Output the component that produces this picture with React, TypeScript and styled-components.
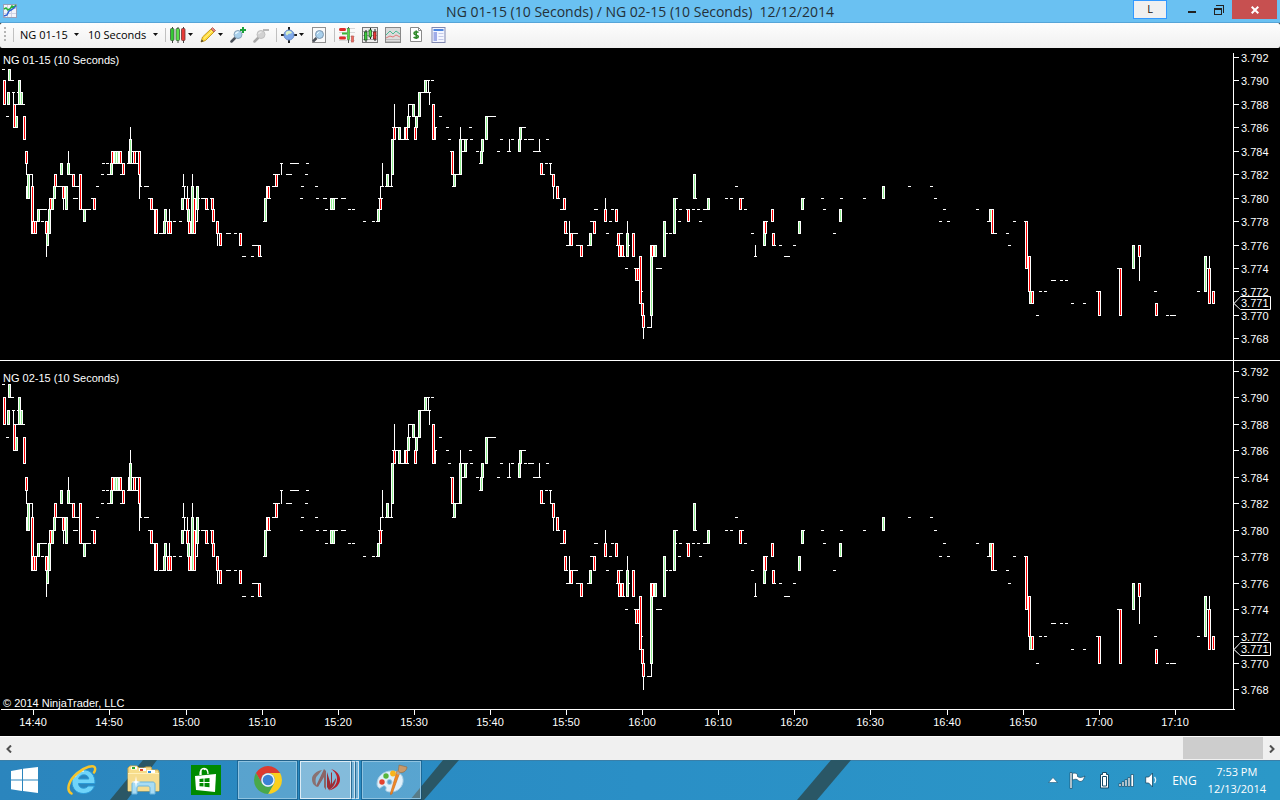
import React from "react";
import styled, { createGlobalStyle } from "styled-components";

const GlobalStyle = createGlobalStyle`
  * { box-sizing: border-box; }
  body { margin: 0; background: #000; }
  button, select { font: inherit; color: inherit; border: 0; padding: 0; margin: 0; background: none; }
  svg { display: block; }
`;

const UI_FONT = `"Open Sans", "Noto Sans", sans-serif`;
const CHART_FONT = `"Liberation Sans", Arial, sans-serif`;

const Window = styled.div`
  display: flex;
  flex-direction: column;
  min-height: 100vh;
  background: #000;
  font-family: ${UI_FONT};
  overflow: hidden;
`;

/* ---------- title bar ---------- */

const TitleBar = styled.header`
  position: relative;
  display: flex;
  justify-content: space-between;
  height: 23px;
  padding-left: 3px;
  background: #6ac1f2;
  border-bottom: 1px solid #56a5d8;
`;

const AppIcon = styled.div`
  padding-top: 4px;
`;

const Title = styled.h1`
  position: absolute;
  inset: 0;
  margin: 0;
  font-size: 14px;
  font-weight: 400;
  line-height: 23px;
  text-align: center;
  white-space: pre;
  color: #243038;
  pointer-events: none;
`;

const WindowControls = styled.div`
  position: relative;
  display: flex;
  align-items: flex-start;
  padding-right: 3px;
`;

const LanguageTag = styled.button`
  width: 34px;
  height: 19px;
  margin-right: 11px;
  border: 1px solid #3399ff;
  background: #f0f0f0;
  font-size: 11px;
  line-height: 14px;
  padding-bottom: 2px;
  color: #111;
`;

const ControlButton = styled.button<{ $close?: boolean }>`
  display: flex;
  align-items: center;
  justify-content: center;
  width: ${(p) => (p.$close ? 45 : 27)}px;
  height: 19px;
  background: ${(p) => (p.$close ? "#c75050" : "transparent")};
`;

/* ---------- toolbar ---------- */

const Toolbar = styled.div`
  display: flex;
  align-items: center;
  gap: 7px;
  height: 25px;
  padding: 0 4px 2px;
  border-radius: 2px;
  background: linear-gradient(#fdfdfd, #f0f0f0);
  font-size: 11px;
  color: #000;
`;

const Separator = styled.span`
  width: 1px;
  height: 14px;
  margin-right: -3px;
  background: #c0c0c0;
`;

const Picker = styled.label`
  display: flex;
  align-items: center;
  gap: 6px;
  margin: 0 0 0 2px;

  select {
    appearance: none;
    outline: 0;
    line-height: 16px;
  }
`;

const ToolButton = styled.button`
  display: flex;
  align-items: center;
  gap: 2px;
  height: 20px;
`;

/* ---------- charts ---------- */

const ChartRow = styled.section<{ $grow: number; $divided?: boolean }>`
  position: relative;
  display: grid;
  grid-template-columns: minmax(0, 1fr) 47px;
  flex: ${(p) => p.$grow} 0 ${(p) => p.$grow}px;
  border-top: ${(p) => (p.$divided ? "1px solid #fff" : "0")};
  font-family: ${CHART_FONT};
  font-size: 11px;
  line-height: 14px;
  color: #fff;
`;

const PlotSvg = styled.svg`
  width: 100%;
  height: 100%;
  min-height: 0;
`;

const AxisSvg = styled.svg`
  width: 100%;
  height: 100%;
  fill: #fff;
  overflow: visible;
`;

const PanelLabel = styled.h2<{ $top: number }>`
  position: absolute;
  left: 3px;
  top: ${(p) => p.$top}px;
  margin: 0;
  font-size: 11px;
  font-weight: 400;
`;

const Copyright = styled.small`
  position: absolute;
  left: 3px;
  bottom: 0;
  font-size: 11px;
  line-height: 12px;
`;

const TimeAxis = styled.div`
  flex: none;
  height: 27px;
  padding-right: 46px;
  font-family: ${CHART_FONT};
  font-size: 11px;
`;

/* ---------- scroll bar ---------- */

const ScrollBar = styled.div`
  display: flex;
  flex: none;
  height: 24px;
  background: #f0f0f0;
  border-top: 1px solid #fff;
`;

const ScrollArrow = styled.button`
  display: flex;
  align-items: center;
  justify-content: center;
  width: 17px;
`;

const ScrollTrack = styled.div`
  display: flex;
  flex: 1;
  justify-content: flex-end;
  padding-bottom: 1px;
`;

const ScrollThumb = styled.div`
  width: 80px;
  background: #cdcdcd;
`;

/* ---------- taskbar ---------- */

const Taskbar = styled.footer`
  position: relative;
  display: flex;
  flex: none;
  justify-content: space-between;
  height: 40px;
  background: linear-gradient(90deg, #2b85bd, #2a8fc6 50%, #2b98c8);
  box-shadow: inset 0 1px #3a7fa8;
  color: #fff;
`;

const Wallpaper = styled.svg`
  position: absolute;
  left: 0;
  top: 0;
  width: 100%;
  height: 40px;
`;

const TaskList = styled.nav`
  position: relative;
  display: flex;
  align-items: flex-start;
  gap: 3px;
  padding-top: 1px;
`;

const TaskButton = styled.button<{ $state?: "open" | "active"; $width?: number }>`
  display: flex;
  align-items: center;
  justify-content: center;
  width: ${(p) => p.$width ?? 59}px;
  height: 38px;
  border: 1px solid
    ${(p) => (p.$state === "active" ? "#dcecf6" : p.$state ? "#8fc3e0" : "transparent")};
  background: ${(p) =>
    p.$state === "active"
      ? "rgba(255,255,255,0.42)"
      : p.$state
        ? "rgba(255,255,255,0.22)"
        : "transparent"};
  box-shadow: ${(p) => (p.$state ? "0 0 0 1px rgba(10,70,110,0.5)" : "none")};
`;

const TaskGroup = styled.div`
  display: flex;
  width: 59px;
  height: 38px;
`;

const StackEdge = styled.span<{ $width: number }>`
  width: ${(p) => p.$width}px;
  border: 1px solid #cfe3f0;
  border-left: 1px solid #2b6c94;
  background: rgba(255, 255, 255, 0.35);
`;

const Tray = styled.div`
  position: relative;
  display: flex;
  align-items: center;
  gap: 7px;
  padding-right: 14px;
  font-size: 12px;
  line-height: 17px;
`;

const TrayButton = styled.button<{ $left?: number; $right?: number }>`
  display: flex;
  padding: 0 ${(p) => p.$right ?? 0}px 0 ${(p) => p.$left ?? 0}px;
`;

const Clock = styled.time`
  font-size: 11px;
  text-align: center;
`;

/* ---------- price data: levels are thousandths above 3.768 ---------- */

type Body = [x: number, low: number, high: number, kind: "r" | "g" | "w"];
type Wick = [x: number, low: number, high: number];
type Dash = [x: number, level: number, width: number];

const bodies: Body[] = [
  [8, 22, 23, "g"], [3, 20, 22, "r"], [7, 20, 21, "g"], [13, 18, 20, "r"], [15, 18, 19, "g"],
  [18, 20, 22, "g"], [20, 20, 21, "g"], [23, 17, 19, "r"], [25, 15, 16, "r"], [26, 12, 13, "w"],
  [27, 12, 14, "g"], [31, 9, 13, "r"], [32, 9, 10, "r"], [34, 9, 10, "r"], [37, 10, 11, "g"],
  [45, 9, 10, "r"], [46, 8, 9, "g"], [48, 9, 11, "g"], [49, 11, 12, "r"], [51, 11, 12, "g"],
  [53, 12, 13, "g"], [54, 13, 14, "r"], [62, 12, 13, "r"], [65, 11, 13, "g"], [60, 14, 15, "g"],
  [67, 14, 15, "g"], [72, 13, 14, "r"], [79, 11, 14, "r"], [83, 10, 11, "g"], [93, 11, 12, "r"],
  [110, 14, 15, "g"], [111, 15, 16, "r"], [114, 15, 16, "g"], [116, 15, 16, "g"], [119, 15, 16, "r"],
  [122, 14, 15, "r"], [128, 15, 16, "g"], [129, 15, 17, "g"], [133, 15, 16, "r"], [138, 14, 16, "r"],
  [150, 11, 12, "r"], [154, 9, 11, "w"], [155, 9, 11, "r"], [163, 9, 10, "g"], [164, 10, 11, "g"],
  [167, 9, 10, "r"], [169, 9, 10, "r"], [181, 11, 12, "g"], [186, 11, 12, "r"], [187, 10, 11, "g"],
  [188, 9, 10, "r"], [190, 9, 10, "g"], [191, 9, 13, "g"], [193, 9, 12, "r"], [196, 11, 13, "g"],
  [205, 11, 12, "r"], [211, 11, 12, "r"], [212, 10, 11, "r"], [216, 9, 10, "r"], [219, 8, 9, "r"],
  [239, 8, 9, "r"], [258, 7, 8, "r"], [264, 10, 12, "g"], [267, 12, 13, "r"], [275, 13, 14, "r"],
  [330, 11, 12, "g"], [332, 11, 12, "g"], [377, 10, 11, "g"], [379, 11, 12, "r"], [386, 13, 14, "g"],
  [391, 14, 17, "g"], [393, 17, 18, "r"], [398, 17, 18, "g"], [405, 17, 18, "r"], [407, 18, 19, "g"],
  [412, 19, 20, "g"], [414, 17, 18, "r"], [415, 18, 19, "g"], [418, 19, 21, "g"], [424, 21, 22, "g"],
  [432, 17, 20, "r"], [451, 14, 16, "r"], [453, 13, 14, "g"], [459, 14, 17, "g"], [464, 16, 17, "g"],
  [480, 15, 16, "g"], [481, 16, 17, "g"], [485, 17, 19, "g"], [518, 16, 17, "g"], [519, 17, 18, "g"],
  [540, 14, 15, "r"], [552, 13, 14, "r"], [556, 12, 13, "r"], [563, 11, 12, "r"], [564, 9, 10, "r"],
  [570, 8, 9, "r"], [580, 7, 8, "r"], [589, 8, 9, "g"], [593, 9, 10, "r"], [604, 10, 11, "r"],
  [615, 10, 11, "r"], [617, 8, 9, "r"], [618, 7, 8, "r"], [621, 7, 8, "r"], [626, 7, 9, "g"],
  [632, 7, 9, "r"], [635, 5, 6, "r"], [637, 5, 6, "r"], [639, 3, 7, "r"], [641, 2, 3, "r"],
  [642, 1, 2, "r"], [650, 2, 7, "g"], [651, 7, 8, "r"], [654, 7, 8, "g"], [663, 7, 10, "g"],
  [673, 9, 12, "g"], [687, 10, 11, "r"], [707, 11, 12, "g"], [693, 12, 14, "g"], [739, 11, 12, "r"],
  [763, 8, 9, "g"], [764, 9, 10, "r"], [771, 10, 11, "r"], [772, 8, 9, "r"], [801, 11, 12, "g"],
  [798, 9, 10, "g"], [839, 10, 11, "g"], [882, 12, 13, "g"], [989, 10, 11, "g"], [991, 9, 11, "r"],
  [1025, 6, 10, "r"], [1028, 4, 7, "r"], [1029, 3, 4, "g"], [1031, 3, 4, "r"], [1098, 2, 4, "r"],
  [1119, 2, 6, "r"], [1132, 6, 8, "g"], [1138, 7, 8, "r"], [1155, 2, 3, "r"], [1204, 4, 7, "g"],
  [1208, 3, 6, "r"], [1212, 3, 4, "r"],
];

const wicks: Wick[] = [
  [13, 20, 21], [26, 14, 15], [32, 13, 14], [46, 7, 8], [63, 11, 12], [68, 15, 16], [130, 17, 18],
  [139, 12, 14], [140, 13, 14], [169, 10, 11], [183, 13, 14], [184, 12, 13], [187, 12, 13],
  [192, 13, 14], [197, 10, 11], [217, 8, 9], [266, 12, 13], [281, 14, 15], [380, 12, 13],
  [382, 13, 15], [391, 13, 14], [394, 18, 20], [404, 17, 18], [408, 19, 20], [428, 21, 22],
  [429, 20, 21], [435, 17, 18], [460, 17, 18], [509, 16, 17], [539, 16, 17], [550, 14, 15],
  [553, 12, 13], [569, 9, 10], [569, 8, 9], [605, 11, 12], [627, 9, 10], [643, 0, 1], [651, 1, 2],
  [650, 7, 8], [755, 7, 8], [763, 9, 10], [1139, 5, 7], [1209, 6, 7],
];

const dashes: Dash[] = [
  [2, 23, 3], [8, 22, 6], [6, 19, 3], [12, 21, 3], [17, 21, 2], [14, 20, 11], [26, 14, 7],
  [37, 11, 10], [41, 10, 3], [53, 13, 14], [67, 14, 5], [72, 13, 7], [73, 12, 5], [79, 11, 12],
  [91, 12, 3], [96, 13, 3], [102, 15, 3], [106, 15, 3], [101, 14, 3], [107, 14, 6], [120, 14, 5],
  [127, 15, 6], [128, 16, 13], [132, 15, 6], [139, 13, 3], [144, 13, 5], [148, 12, 4], [153, 11, 3],
  [159, 9, 7], [173, 10, 3], [179, 10, 3], [182, 13, 4], [182, 12, 8], [194, 10, 3], [196, 12, 4],
  [201, 12, 3], [204, 12, 4], [205, 11, 4], [210, 12, 3], [216, 9, 5], [226, 9, 5], [234, 9, 3],
  [242, 7, 4], [251, 7, 3], [252, 8, 9], [258, 7, 4], [263, 10, 4], [264, 12, 7], [266, 13, 4],
  [272, 13, 6], [273, 14, 7], [280, 15, 3], [290, 15, 9], [306, 15, 3], [286, 14, 6], [305, 14, 3],
  [301, 13, 3], [315, 13, 3], [300, 12, 3], [316, 12, 3], [323, 12, 4], [330, 12, 8], [341, 12, 5],
  [325, 11, 3], [348, 11, 3], [352, 11, 3], [363, 10, 3], [372, 10, 3], [376, 10, 4], [378, 12, 5],
  [380, 13, 4], [385, 13, 8], [392, 18, 9], [398, 17, 11], [408, 20, 7], [407, 19, 4], [414, 19, 5],
  [418, 21, 13], [424, 22, 6], [431, 22, 3], [435, 18, 2], [439, 19, 3], [446, 18, 3], [448, 17, 3],
  [469, 18, 3], [470, 17, 3], [450, 16, 4], [452, 13, 4], [453, 14, 9], [459, 17, 9], [462, 16, 5],
  [476, 16, 3], [479, 15, 4], [485, 19, 11], [500, 17, 3], [497, 16, 3], [507, 16, 4], [511, 17, 3],
  [519, 18, 7], [524, 17, 3], [528, 17, 6], [533, 16, 8], [546, 17, 3], [540, 14, 5], [545, 15, 3],
  [549, 15, 3], [550, 14, 5], [556, 12, 4], [560, 11, 4], [564, 9, 4], [569, 9, 9], [566, 8, 6],
  [576, 8, 3], [579, 8, 3], [587, 8, 3], [590, 10, 5], [594, 11, 4], [611, 11, 3], [609, 10, 3],
  [606, 9, 3], [617, 9, 6], [616, 8, 3], [621, 7, 4], [626, 8, 4], [625, 6, 3], [634, 6, 5],
  [639, 4, 4], [647, 1, 4], [650, 8, 7], [656, 6, 6], [665, 9, 3], [669, 9, 3], [673, 12, 5],
  [675, 11, 2], [679, 11, 3], [678, 10, 3], [686, 11, 4], [692, 11, 3], [697, 11, 3], [699, 10, 3],
  [703, 11, 6], [694, 12, 3], [725, 12, 3], [730, 12, 3], [735, 13, 3], [739, 12, 5], [744, 11, 3],
  [751, 9, 3], [754, 7, 3], [784, 7, 6], [779, 8, 3], [793, 8, 3], [763, 10, 5], [772, 8, 4],
  [801, 12, 4], [821, 12, 3], [823, 11, 3], [833, 9, 3], [840, 12, 3], [863, 12, 3], [908, 13, 3],
  [930, 13, 3], [934, 12, 3], [943, 11, 3], [939, 10, 3], [947, 10, 3], [976, 11, 3], [987, 10, 3],
  [993, 9, 4], [1006, 9, 3], [1008, 8, 3], [1013, 10, 3], [1024, 10, 4], [1036, 2, 3], [1039, 4, 3],
  [1044, 4, 3], [1051, 5, 5], [1060, 5, 3], [1065, 5, 3], [1071, 3, 3], [1083, 3, 3], [1096, 4, 4],
  [1117, 6, 3], [1154, 4, 3], [1166, 2, 3], [1170, 2, 6], [1197, 4, 3], [1207, 6, 4],
];

const PLOT_WIDTH = 1233;
const bodyFill = { r: "#ff0000", g: "#90ee90", w: "#ffffff" };

interface Scale {
  height: number;
  base: number;
  step: number;
}

const levelY = (s: Scale, level: number) => Math.round(s.base - s.step * level);

function Plot({ scale, label }: { scale: Scale; label: string }) {
  const y = (level: number) => levelY(scale, level);
  return (
    <PlotSvg
      viewBox={`0 0 ${PLOT_WIDTH} ${scale.height}`}
      preserveAspectRatio="none"
      shapeRendering="crispEdges"
      role="img"
      aria-label={label}
    >
      {dashes.map(([x, level, width], i) => (
        <rect key={`d${i}`} x={x} y={y(level)} width={width} height={1} fill="#fff" />
      ))}
      {wicks.map(([x, low, high], i) => (
        <rect key={`w${i}`} x={x} y={y(high)} width={1} height={y(low) - y(high) + 1} fill="#fff" />
      ))}
      {bodies.map(([x, low, high, kind], i) => {
        const top = y(high);
        const h = y(low) - top + 1;
        return (
          <g key={`b${i}`}>
            <rect x={x} y={top} width={kind === "w" ? 2 : 3} height={h} fill="#fff" />
            {kind !== "w" && (
              <rect x={x + 1} y={top + 1} width={1} height={h - 2} fill={bodyFill[kind]} />
            )}
          </g>
        );
      })}
    </PlotSvg>
  );
}

function PriceAxis({ scale, lineTop }: { scale: Scale; lineTop: number }) {
  const pct = (v: number) => `${(v / scale.height) * 100}%`;
  const ticks = Array.from({ length: 13 }, (_, i) => i * 2);
  return (
    <AxisSvg role="img" aria-label="Price axis">
      <rect x={0} y={lineTop} width={1} height="100%" shapeRendering="crispEdges" />
      {ticks.map((level) => (
        <React.Fragment key={level}>
          <rect x={1} y={pct(levelY(scale, level))} width={5} height={1} shapeRendering="crispEdges" />
          <text x={8} y={pct(levelY(scale, level))} dy={5}>
            {(3.768 + level / 1000).toFixed(3)}
          </text>
        </React.Fragment>
      ))}
      <svg x={0} y={pct(levelY(scale, 3))} overflow="visible">
        <path d="M1 .5L7.500-6.500H37.500V6.500H7.500z" fill="#000" stroke="#fff" />
        <path d="M1 .5L7.500-6.500M1 .5L7.500 6.500" stroke="#a8a8a8" />
        <text x={8} y={4}>3.771</text>
      </svg>
    </AxisSvg>
  );
}

const upperScale: Scale = { height: 312, base: 290.3, step: 11.72 };
const lowerScale: Scale = { height: 348, base: 328.05, step: 13.27 };

const times: [string, number][] = [
  ["14:40", 33], ["14:50", 109], ["15:00", 186], ["15:10", 262], ["15:20", 338], ["15:30", 414],
  ["15:40", 490], ["15:50", 566], ["16:00", 642], ["16:10", 718], ["16:20", 794], ["16:30", 870],
  ["16:40", 947], ["16:50", 1023], ["17:00", 1099], ["17:10", 1175],
];

/* ---------- toolbar icons ---------- */

const Caret = () => (
  <svg width="5" height="3" viewBox="0 0 5 3" fill="#111" aria-hidden="true">
    <path d="M0 0h5L2.500 3z" />
  </svg>
);

const Icon = ({ children }: { children: React.ReactNode }) => (
  <svg width="16" height="16" viewBox="0 0 16 16" fill="none" aria-hidden="true">
    {children}
  </svg>
);

const ChartLogo = () => (
  <svg width="14" height="14" viewBox="0 0 14 14" fill="none" aria-hidden="true">
    <rect x=".5" y=".5" width="13" height="13" fill="#f4f4fa" stroke="#9aa0b8" />
    <path d="M4.500 1v12M8.500 1v12M1 4.500h12M1 9.500h12" stroke="#cfd2e4" />
    <path d="M1 5l2-1 2 2 2-1 2-3 2 1 2-2" stroke="#27b33a" strokeWidth="1.500" />
    <path d="M1 12l3-1 2-4 2-1 3-2 2-2" stroke="#2e62d4" strokeWidth="1.500" />
  </svg>
);

const Candles = () => (
  <Icon>
    <path d="M2.500 0v16M8 0v16M13.500 0v16" stroke="#444" />
    <rect x=".5" y="1.500" width="3.500" height="12" rx="1" fill="#35c835" stroke="#3a5a3a" strokeWidth=".8" />
    <rect x="6" y="1.500" width="3.500" height="12" rx="1" fill="#5be04c" stroke="#3a5a3a" strokeWidth=".8" />
    <rect x="11.500" y="1.500" width="3.500" height="12" rx="1" fill="#e83a36" stroke="#6c3532" strokeWidth=".8" />
  </Icon>
);

const Pencil = () => (
  <Icon>
    <path d="M1 15l1.500-5L11 2l3 3-8.500 8.500z" fill="#ffdc3c" stroke="#b8860b" strokeWidth=".8" />
    <path d="M4 11.500L12 4" stroke="#fff5a0" />
    <path d="M11 2l1.500-1.500 3 3L14 5z" fill="#e8847a" stroke="#a85a50" strokeWidth=".8" />
    <path d="M1 15l.8-2.500 1.700 1.700z" fill="#333" />
  </Icon>
);

const Lens = ({ muted = false }: { muted?: boolean }) => (
  <>
    <path d="M5 11L1.500 14.500" stroke={muted ? "#a8a8a8" : "#4a5058"} strokeWidth="2.500" strokeLinecap="round" />
    <circle cx="8" cy="7.500" r="4" fill={muted ? "#d2d2d2" : "#a9d0ec"} stroke={muted ? "#c0c0c0" : "#8aa3b8"} />
    <path d="M5.500 7a3 3 0 0 1 3-2" stroke={muted ? "#e8e8e8" : "#e6f6ff"} strokeWidth="1.500" />
  </>
);

const Globe = () => (
  <Icon>
    <path d="M8 0v16M0 8h16" stroke="#222" strokeWidth="2" />
    <circle cx="8" cy="8" r="5" fill="#7fa9ea" stroke="#6a8cc8" />
    <path d="M4.500 6c1.500-3 5-3 6.500-.5-1 2-3 .5-4 2s-1.500 1-2.500-1.500z" fill="#d8f0c8" />
  </Icon>
);

const PageLens = () => (
  <Icon>
    <rect x="1.500" y=".5" width="13" height="15" fill="#fafafa" stroke="#909090" />
    <path d="M5.500 11L2 14.500" stroke="#4a5058" strokeWidth="2.500" />
    <circle cx="8.500" cy="7.500" r="4" fill="#a9d0ec" stroke="#7f98b0" />
    <path d="M6.300 7a2.500 2.500 0 0 1 2-2" stroke="#eefaff" />
  </Icon>
);

const DepthIcon = () => (
  <Icon>
    <path d="M0 1.500h16M0 5.500h16M0 9.500h16M0 13.500h16" stroke="#d8d8d8" />
    <path d="M1.500 2.500h4M1.500 11h4" stroke="#e02a2a" strokeWidth="3" strokeLinecap="round" />
    <path d="M3 6.500h5" stroke="#38b838" strokeWidth="2" />
    <path d="M9.500 0v16" stroke="#555" />
    <rect x="8.500" y="1.500" width="2" height="11" fill="#58d84a" stroke="#4a9a44" strokeWidth=".7" />
    <rect x="12.500" y="9" width="2" height="6" fill="#f06a60" stroke="#b85a54" strokeWidth=".7" />
  </Icon>
);

const BarsGridIcon = () => (
  <Icon>
    <rect x=".5" y=".5" width="15" height="15" fill="#ededed" stroke="#777" />
    <path d="M1 4.500h14M1 8.500h14M1 12.500h14" stroke="#aaa" />
    <path d="M4 3v12M8.500 1v11M13 2v12" stroke="#222" />
    <rect x="2.500" y="5" width="2.500" height="8" fill="#3ccc3c" stroke="#14501a" strokeWidth=".7" />
    <rect x="7" y="3" width="2.500" height="7" fill="#5be04c" stroke="#14501a" strokeWidth=".7" />
    <rect x="11.500" y="5" width="2.500" height="7" fill="#e83a36" stroke="#6c1512" strokeWidth=".7" />
  </Icon>
);

const LinesIcon = () => (
  <Icon>
    <rect x=".5" y=".5" width="15" height="15" fill="#dcdcdc" stroke="#888" />
    <path d="M1 12.500h14M1 14.500h14" stroke="#bbb" />
    <path d="M1 8l4-4 3 3 3-3 4 3" stroke="#4cb894" />
    <path d="M1 11l4-2 3 1 3-2 4 2" stroke="#e07a7a" />
  </Icon>
);

const DollarIcon = () => (
  <Icon>
    <path d="M2.500 .5h8l3 3v11h-11z" fill="#fff" stroke="#8a8a8a" />
    <path d="M10.500 .5v3h3" stroke="#8a8a8a" />
    <path d="M10.500 5.500C9 4.300 6 4.400 6 6.300c0 2 4.300 1.200 4.300 3.200 0 2-3.300 1.900-4.700.6M8.200 3.500v8.500" stroke="#2f8a2a" strokeWidth="1.600" />
  </Icon>
);

const PanelIcon = () => (
  <Icon>
    <rect x="1" y=".5" width="13" height="15" fill="#f4f6ff" stroke="#8088b0" />
    <rect x="2.500" y="2" width="10" height="2" fill="#4f86e0" />
    <rect x="2.500" y="5" width="3.500" height="9" fill="#a0ace8" />
    <path d="M7.500 6.500h5M7.500 9.500h5M7.500 12.500h5" stroke="#c4cae8" />
  </Icon>
);

/* ---------- taskbar icons ---------- */

const StartLogo = () => (
  <svg width="27" height="26" viewBox="0 0 27 26" fill="#fff" aria-hidden="true">
    <path d="M0 4l11-2v10.500H0zM12 1.800L27 0v12.500H12zM0 13.500h11V24L0 22.300zM12 13.500h15V26l-15-2z" />
  </svg>
);

const ExplorerE = () => (
  <svg width="30" height="32" viewBox="0 0 30 32" fill="none" aria-hidden="true">
    <path
      d="M28 19.500H11.500c.3 3 2.200 4.700 5 4.700 2.200 0 3.600-.8 4.600-2.200h6.300c-1.700 4.800-5.700 7.500-11 7.500C9.700 29.500 5 24.700 5 18S9.800 5.800 16.400 5.800c7 0 11.900 5 11.600 13.700zM21.800 15c-.4-2.700-2.300-4.200-5-4.200s-4.700 1.600-5.200 4.200z"
      fill="#6fd4fa"
      stroke="#2a9ad8"
    />
    <path d="M8 13c2-4 5-6 9-6" stroke="#d4f5ff" strokeWidth="1.500" />
    <path
      d="M4.500 29.500C-1.500 26 2 16 10 9.500 18 2.500 27 .5 28 4c.4 1.500 0 3-1 4.500"
      stroke="#f6c52c"
      strokeWidth="2.500"
      strokeLinecap="round"
    />
  </svg>
);

const FolderIcon = () => (
  <svg width="33" height="30" viewBox="0 0 33 30" fill="none" aria-hidden="true">
    <path d="M1 3l2-2h7l2 2h5l2-1h5l1 3h6l1 2v19H1z" fill="#f7dd8a" stroke="#cfa94c" />
    <path d="M4 1.500h6v3H4z" fill="#fff" />
    <path d="M5 2h3v2H5z" fill="#2ea82e" />
    <path d="M12 3h7v3h-7z" fill="#fff" />
    <path d="M13 4h3v2h-3z" fill="#e0462a" />
    <path d="M20 5h8v3h-8z" fill="#fff" />
    <path d="M21 6h3v2h-3z" fill="#2a8ae0" />
    <path d="M1 8h31v18H1z" fill="#f6dc8e" />
    <path d="M1 8.500h31" stroke="#fff0b8" />
    <path d="M5 29V19c0-1 1-2 2-2h19c1 0 2 1 2 2v10h-5v-6c0-1-1-2-2-2h-9c-1 0-2 1-2 2v6z" fill="#a8dcf4" stroke="#6ab4dc" />
    <path d="M9 11l.8 5 3.700 1-3.700 1L9 23l-.8-5-3.700-1 3.700-1z" fill="#fff" />
  </svg>
);

const StoreIcon = () => (
  <svg width="30" height="30" viewBox="0 0 30 30" fill="none" aria-hidden="true">
    <path d="M0 0h30v30H0z" fill="#008a00" />
    <path d="M10 10V6.500C10 3 13 3 14 5M9 10c0-5 1.500-6.500 4-6.500S17 6 17 9" stroke="#fff" strokeWidth="1.300" />
    <path d="M4 11l21-2-1 18-19-2z" fill="#fff" />
    <path d="M8.500 14l4-.4V17h-4zM13.500 13.500l5-.5v4h-5zM8.500 18h4v3.600l-4-.4zM13.500 18h5v4.200l-5-.5z" fill="#008a00" />
  </svg>
);

const ChromeIcon = () => (
  <svg width="28" height="28" viewBox="0 0 28 28" aria-hidden="true">
    <path d="M1.900 7A14 14 0 0 1 26.100 7H14a7 7 0 0 0-6 10.500z" fill="#dc3a30" />
    <path d="M26.100 7A14 14 0 0 1 14 28l6-10.500A7 7 0 0 0 14 7z" fill="#fbd01e" />
    <path d="M14 28A14 14 0 0 1 1.900 7L8 17.500a7 7 0 0 0 12 0z" fill="#49a84a" />
    <circle cx="14" cy="14" r="6.700" fill="#f4f4f4" />
    <circle cx="14" cy="14" r="5.300" fill="#3c82d4" />
  </svg>
);

const NinjaIcon = () => (
  <svg width="28" height="22" viewBox="0 0 28 22" fill="none" aria-hidden="true">
    <path d="M5 18C1 16 0 13 0 10 0 6 4 2 10 1L6 6C3 8 3 13 5 18z" fill="#8a7272" />
    <path d="M12 0l2 2v19l-2-3V8L6 18 4 17z" fill="#8c6466" />
    <path d="M15 3l4 13V3l1 1v11l4-6c0 5-3 10-7 12l-2-3z" fill="#9c2c36" />
    <path d="M19 0c6 2 9 6 9 10.500S24 20 17 21.500c6-4 8-7 8-11.500S23 3 19 0z" fill="#b8202c" />
  </svg>
);

const PaintIcon = () => (
  <svg width="32" height="32" viewBox="0 0 32 32" fill="none" aria-hidden="true">
    <path
      d="M1 20C1 12 8 7 15 7c8 0 13 4 12 11-1 6-6 10-12 10-3 0-6-.5-5-3 .8-2-1-4-3-3-2 1-3 3-4 2-1-.8-2-2-2-4zm10-2a2.500 2.500 0 1 0 5 0 2.500 2.500 0 0 0-5 0z"
      fill="#e0f0fa"
      fillRule="evenodd"
      stroke="#a4cce4"
    />
    <circle cx="6" cy="18" r="2.700" fill="#e2412e" />
    <circle cx="10" cy="12" r="2.700" fill="#57b53c" />
    <circle cx="17" cy="9.500" r="2.900" fill="#f8b41c" />
    <path d="M24 8L16 30l-1.500.5V29L21 7z" fill="#f08a24" stroke="#c8641c" strokeWidth=".6" />
    <path d="M22 6l3 1-1.500 4-3-1z" fill="#a8a8a8" />
    <path d="M23 1l8 2c0 3-3 6-6.500 5.500C21 8 23 4 23 1z" fill="#c99a6a" stroke="#94683e" strokeWidth=".6" />
  </svg>
);

export default function App() {
  return (
    <Window>
      <GlobalStyle />
      <TitleBar>
        <AppIcon>
          <ChartLogo />
        </AppIcon>
        <Title>{"NG 01-15 (10 Seconds) / NG 02-15 (10 Seconds)  12/12/2014"}</Title>
        <WindowControls>
          <LanguageTag>L</LanguageTag>
          <ControlButton aria-label="Minimize">
            <svg width="8" height="8" viewBox="0 0 8 8" fill="#222">
              <path d="M0 5h8v2H0z" />
            </svg>
          </ControlButton>
          <ControlButton aria-label="Restore">
            <svg width="10" height="10" viewBox="0 0 10 10" fill="none" stroke="#222" shapeRendering="crispEdges">
              <path d="M2 .5h7.500V8" />
              <path d="M.5 3.500h7v6h-7zM0 4.500h8" />
            </svg>
          </ControlButton>
          <ControlButton $close aria-label="Close">
            <svg width="8" height="8" viewBox="0 0 8 8" stroke="#fff" strokeWidth="2">
              <path d="M.7.7l6.600 6.600M7.300.7L.7 7.300" />
            </svg>
          </ControlButton>
        </WindowControls>
      </TitleBar>

      <Toolbar role="toolbar" aria-label="Chart tools">
        <svg width="2" height="16" viewBox="0 0 2 16" fill="#b4b4b4" aria-hidden="true">
          <path d="M0 0h2v2H0zM0 4h2v2H0zM0 8h2v2H0zM0 12h2v2H0z" />
        </svg>
        <Separator />
        <Picker>
          <select aria-label="Instrument">
            <option>NG 01-15</option>
          </select>
          <Caret />
        </Picker>
        <Picker>
          <select aria-label="Interval">
            <option>10 Seconds</option>
          </select>
          <Caret />
        </Picker>
        <Separator />
        <ToolButton aria-label="Chart style">
          <Candles />
          <Caret />
        </ToolButton>
        <ToolButton aria-label="Drawing tools">
          <Pencil />
          <Caret />
        </ToolButton>
        <ToolButton aria-label="Zoom in">
          <Icon>
            <Lens />
            <path d="M13 0v6M10 3h6" stroke="#1aa03a" strokeWidth="2" />
          </Icon>
        </ToolButton>
        <ToolButton aria-label="Zoom out">
          <Icon>
            <Lens muted />
            <path d="M10 3h6" stroke="#b8b8b8" strokeWidth="2" />
          </Icon>
        </ToolButton>
        <Separator />
        <ToolButton aria-label="Cross hair">
          <Globe />
          <Caret />
        </ToolButton>
        <ToolButton aria-label="Data box">
          <PageLens />
        </ToolButton>
        <Separator />
        <ToolButton aria-label="Chart trader">
          <DepthIcon />
        </ToolButton>
        <ToolButton aria-label="Data series">
          <BarsGridIcon />
        </ToolButton>
        <ToolButton aria-label="Indicators">
          <LinesIcon />
        </ToolButton>
        <ToolButton aria-label="Strategies">
          <DollarIcon />
        </ToolButton>
        <ToolButton aria-label="Properties">
          <PanelIcon />
        </ToolButton>
      </Toolbar>

      <ChartRow $grow={312}>
        <Plot scale={upperScale} label="NG 01-15 candlestick chart" />
        <PriceAxis scale={upperScale} lineTop={5} />
        <PanelLabel $top={5}>NG 01-15 (10 Seconds)</PanelLabel>
      </ChartRow>
      <ChartRow $grow={349} $divided>
        <Plot scale={lowerScale} label="NG 02-15 candlestick chart" />
        <PriceAxis scale={lowerScale} lineTop={0} />
        <PanelLabel $top={10}>NG 02-15 (10 Seconds)</PanelLabel>
        <Copyright>© 2014 NinjaTrader, LLC</Copyright>
      </ChartRow>
      <TimeAxis>
        <AxisSvg role="img" aria-label="Time axis">
          <rect x={1} y={0} width="100%" height={1} shapeRendering="crispEdges" />
          {times.map(([label, x]) => (
            <React.Fragment key={label}>
              <rect x={`${(x / 1234) * 100}%`} y={1} width={1} height={5} shapeRendering="crispEdges" />
              <text x={`${(x / 1234) * 100}%`} y={17} textAnchor="middle">
                {label}
              </text>
            </React.Fragment>
          ))}
        </AxisSvg>
      </TimeAxis>

      <ScrollBar>
        <ScrollArrow aria-label="Scroll left">
          <svg width="6" height="8" viewBox="0 0 6 8" fill="none" stroke="#505050" strokeWidth="2">
            <path d="M5 .5L1.500 4 5 7.500" />
          </svg>
        </ScrollArrow>
        <ScrollTrack>
          <ScrollThumb />
        </ScrollTrack>
        <ScrollArrow aria-label="Scroll right">
          <svg width="6" height="8" viewBox="0 0 6 8" fill="none" stroke="#505050" strokeWidth="2">
            <path d="M1 .5L4.500 4 1 7.500" />
          </svg>
        </ScrollArrow>
      </ScrollBar>

      <Taskbar>
        <Wallpaper aria-hidden="true" fill="#2a5766">
          <path d="M110 40L143 0H157L127 40z" />
          <path d="M410 40L443 0H459L424 40z" />
          <path d="M797 40L831 0H851L817 40z" />
        </Wallpaper>
        <TaskList aria-label="Taskbar">
          <TaskButton $width={49} aria-label="Start">
            <StartLogo />
          </TaskButton>
          <TaskButton aria-label="Internet Explorer">
            <ExplorerE />
          </TaskButton>
          <TaskButton aria-label="File Explorer">
            <FolderIcon />
          </TaskButton>
          <TaskButton aria-label="Store">
            <StoreIcon />
          </TaskButton>
          <TaskButton $state="open" aria-label="Chrome">
            <ChromeIcon />
          </TaskButton>
          <TaskGroup>
            <TaskButton $state="active" $width={51} aria-label="NinjaTrader">
              <NinjaIcon />
            </TaskButton>
            <StackEdge $width={4} />
            <StackEdge $width={4} />
          </TaskGroup>
          <TaskButton $state="open" aria-label="Paint">
            <PaintIcon />
          </TaskButton>
        </TaskList>
        <Tray>
          <TrayButton aria-label="Show hidden icons">
            <svg width="10" height="6" viewBox="0 0 10 6" fill="#fff" stroke="#1d5677" strokeWidth=".6">
              <path d="M5 .5L9.500 5.500h-9z" />
            </svg>
          </TrayButton>
          <TrayButton $left={4} $right={6} aria-label="Action center">
            <svg width="17" height="17" viewBox="0 0 17 17" fill="#fff" stroke="#174a68" strokeWidth=".7">
              <path d="M1 .5h2v16H1z" />
              <path d="M3.500 1.500c2-1 4 0 5 1v2c2 1.500 5 1 7.500-.5-1 2-1.500 5-4 5.500-2 .3-3-1.500-4-2-1.500-.6-3 0-4.500.5z" />
            </svg>
          </TrayButton>
          <TrayButton aria-label="Battery">
            <svg width="12" height="17" viewBox="0 0 12 17" fill="none">
              <path d="M3.500 .5h4v2h2v13.500h-8V2.500h2z" fill="#fff" stroke="#174a68" />
              <path d="M3.500 4.500h4v9.500h-4z" fill="#fff" stroke="#174a68" />
            </svg>
          </TrayButton>
          <TrayButton aria-label="Network">
            <svg width="18" height="14" viewBox="0 0 18 14" fill="#fff" stroke="#174a68" strokeWidth=".7">
              <path d="M1 10.500h2v3H1zM4 8.500h2v5H4zM7 6.500h2v7H7zM10 4.500h2v9h-2zM13 1.500h2.500v12H13z" />
            </svg>
          </TrayButton>
          <TrayButton $left={2} $right={6} aria-label="Volume">
            <svg width="14" height="16" viewBox="0 0 14 16" fill="none">
              <path d="M.7 5h3L7.500 1v14l-3.800-4h-3z" fill="#fff" stroke="#174a68" strokeWidth=".8" />
              <path d="M9.500 5c1.500 2 1.500 4 0 6" stroke="#e4f3fa" strokeWidth="1.300" />
            </svg>
          </TrayButton>
          <TrayButton $right={4}>ENG</TrayButton>
          <Clock>
            7:53 PM
            <br />
            12/13/2014
          </Clock>
        </Tray>
      </Taskbar>
    </Window>
  );
}
